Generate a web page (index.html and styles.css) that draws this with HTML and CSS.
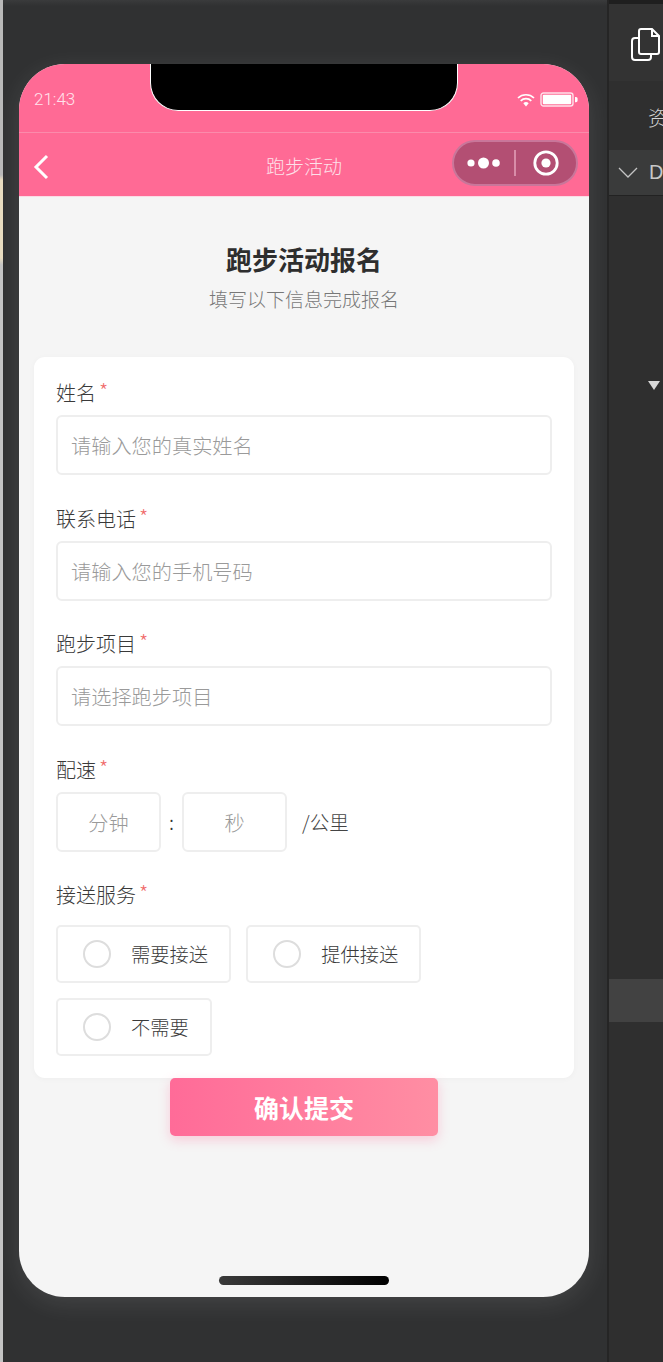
FILE: index.html
```html
<!DOCTYPE html>
<html lang="zh-CN">
<head>
<meta charset="utf-8">
<title>跑步活动</title>
<link rel="stylesheet" href="styles.css">
</head>
<body>
<div class="edge"></div>
<main class="stage">
  <div class="phone">
    <div class="notch"></div>
    <header class="head">
      <div class="status">
        <span class="time">21:43</span>
        <div class="status-icons">
          <svg class="wifi" width="18" height="14" viewBox="0 0 18 14"><path d="M1 5a11.5 11.5 0 0 1 16 0M3.7 7.8a7.6 7.6 0 0 1 10.6 0" fill="none" stroke="#fff" stroke-width="1.7"/><path d="M6.3 10.3a3.8 3.8 0 0 1 5.4 0L9 13.4z" fill="#fff"/></svg>
          <svg class="battery" width="38" height="15" viewBox="0 0 38 15"><rect x="1" y="1" width="32" height="13" rx="2.5" fill="none" stroke="#fff" stroke-opacity=".8" stroke-width="1.4"/><rect x="2.8" y="2.8" width="28.4" height="9.4" rx="1" fill="#fff"/><path d="M35 5h1a1.6 1.6 0 0 1 1.6 1.6v2a1.6 1.6 0 0 1-1.6 1.6h-1z" fill="#fff"/></svg>
        </div>
      </div>
      <nav class="navbar">
        <svg class="back" width="16" height="26" viewBox="0 0 16 26"><path d="M14 2 3 13l11 11" fill="none" stroke="#fff" stroke-width="3"/></svg>
        <span class="nav-title">跑步活动</span>
        <div class="capsule">
          <svg class="dots" width="34" height="14" viewBox="0 0 34 14"><circle cx="4" cy="7" r="3.6" fill="#fff"/><circle cx="16.5" cy="7" r="5.5" fill="#fff"/><circle cx="29" cy="7" r="3.8" fill="#fff"/></svg>
          <span class="cap-line"></span>
          <svg class="target" width="28" height="28" viewBox="0 0 28 28"><circle cx="14" cy="14" r="11.2" fill="none" stroke="#fff" stroke-width="2.8"/><circle cx="14" cy="14" r="4.6" fill="#fff"/></svg>
        </div>
      </nav>
    </header>
    <section class="content">
      <h1 class="title">跑步活动报名</h1>
      <p class="subtitle">填写以下信息完成报名</p>
      <form class="card">
        <div class="group">
          <div class="label">姓名<span class="req">*</span></div>
          <div class="input">请输入您的真实姓名</div>
        </div>
        <div class="group">
          <div class="label">联系电话<span class="req">*</span></div>
          <div class="input">请输入您的手机号码</div>
        </div>
        <div class="group">
          <div class="label">跑步项目<span class="req">*</span></div>
          <div class="input">请选择跑步项目</div>
        </div>
        <div class="group">
          <div class="label">配速<span class="req">*</span></div>
          <div class="pace">
            <div class="input small">分钟</div>
            <span class="colon">:</span>
            <div class="input small">秒</div>
            <span class="unit">/公里</span>
          </div>
        </div>
        <div class="group last">
          <div class="label">接送服务<span class="req">*</span></div>
          <div class="radios">
            <div class="radio"><span class="circle"></span>需要接送</div>
            <div class="radio"><span class="circle"></span>提供接送</div>
            <div class="radio"><span class="circle"></span>不需要</div>
          </div>
        </div>
      </form>
      <div class="submit">确认提交</div>
      <div class="home"></div>
    </section>
  </div>
</main>
<aside class="side">
  <div class="side-cap"></div>
  <div class="side-icon">
    <svg width="30" height="34" viewBox="0 0 30 34"><path d="M7 10H4a3 3 0 0 0-3 3v16a3 3 0 0 0 3 3h13a3 3 0 0 0 3-3v-2" fill="none" stroke="#fff" stroke-width="2"/><path d="M10 1h11l7 7v16a2 2 0 0 1-2 2H10a2 2 0 0 1-2-2V3a2 2 0 0 1 2-2zM21 1v7h7" fill="none" stroke="#fff" stroke-width="2"/></svg>
  </div>
  <div class="side-res">资</div>
  <div class="side-sec">
    <svg class="side-chev" width="20" height="12" viewBox="0 0 20 12"><path d="m1 1 9 9 9-9" fill="none" stroke="#c4c4c4" stroke-width="1.3"/></svg>
    <b>D</b>
  </div>
  <div class="side-tri"></div>
  <div class="side-row"></div>
</aside>
</body>
</html>
```
FILE: styles.css
```css
* { box-sizing: border-box; }
html, body { margin: 0; height: 100%; }
body {
  width: 663px;
  height: 1362px;
  display: flex;
  overflow: hidden;
  background: #303132;
  font-family: "Noto Sans CJK SC", "Noto Sans", sans-serif;
  font-weight: 300;
}
.edge {
  width: 3px;
  flex: none;
  background: linear-gradient(#b9b9b9 0 175px, #e8dcc0 180px 258px, #c4c4c4 265px);
}
.stage {
  width: 604px;
  flex: none;
  padding: 64px 0 0 16px;
  background: linear-gradient(#3a3b3c 0, #303132 6px);
}
.phone {
  position: relative;
  width: 570px;
  height: 1233px;
  border-radius: 46px;
  background: #f5f5f5;
  display: flex;
  flex-direction: column;
  box-shadow: 0 6px 26px rgba(255,255,255,.1);
}
.head { background: #ff6a95; border-radius: 46px 46px 0 0; flex: none; }
.notch {
  position: absolute;
  left: 131px;
  top: 0;
  width: 308px;
  height: 47px;
  background: #000;
  border: 1px solid #fff;
  border-top: 0;
  border-radius: 0 0 28px 28px;
}
.status {
  height: 69px;
  padding: 0 11px 0 15px;
  display: flex;
  align-items: center;
  justify-content: space-between;
  border-bottom: 1px solid #fb8bab;
  color: #ffe3ec;
}
.time { font: 300 17px/20px Roboto, sans-serif; margin-top: 2px; }
.status-icons { display: flex; align-items: center; gap: 5px; margin-top: 3px; }
.navbar {
  position: relative;
  height: 64px;
  padding: 0 11px 0 14px;
  display: flex;
  align-items: center;
  justify-content: space-between;
  border-bottom: 1px solid #fbdbe5;
}
.back { margin-top: 4px; }
.nav-title {
  position: absolute;
  left: 0;
  right: 0;
  top: 20px;
  text-align: center;
  font-size: 19px;
  line-height: 26px;
  color: #fde1ea;
}
.capsule {
  width: 126px;
  height: 46px;
  margin-top: -3px;
  border-radius: 23px;
  background: #b34f73;
  border: 2px solid #c9769a;
  display: flex;
  align-items: center;
  padding-left: 13px;
}
.cap-line { width: 1.5px; height: 26px; margin: 0 16px 0 13px; background: #d88da8; }
.content { flex: 1; display: flex; flex-direction: column; align-items: stretch; padding: 0 15px; }
.title {
  margin: 44px 0 0;
  font-size: 26px;
  line-height: 36px;
  font-weight: 700;
  text-align: center;
  color: #2e2e2e;
}
.subtitle {
  margin: 9px 0 0;
  font-size: 19px;
  line-height: 26px;
  text-align: center;
  color: #787878;
}
.card {
  margin-top: 45px;
  padding: 22px;
  background: #fff;
  border-radius: 11px;
  box-shadow: 0 1px 6px rgba(0,0,0,.03);
}
.group { margin-bottom: 29.5px; }
.group.last { margin-bottom: 0; }
.label {
  font-size: 20px;
  line-height: 26px;
  color: #3a3a3a;
  margin-bottom: 8px;
  height: 28px;
}
.req { color: #f06a6a; font-size: 21px; margin-left: 3px; position: relative; top: -1px; }
.input {
  height: 60px;
  padding: 0 13px;
  border: 2px solid #eeeeee;
  border-radius: 6px;
  font-size: 20.2px;
  line-height: 57px;
  color: #9a9a9a;
}
.pace { display: flex; align-items: center; }
.input.small { width: 105px; padding: 0; text-align: center; }
.colon { width: 21px; text-align: center; font-size: 20px; color: #333; }
.unit { margin-left: 15px; font-size: 19.5px; color: #444; }
.radios { display: flex; flex-wrap: wrap; gap: 15px; margin-top: 16px; }
.radio {
  height: 58px;
  padding: 0 21px 0 25px;
  border: 2px solid #eeeeee;
  border-radius: 5px;
  display: flex;
  align-items: center;
  font-size: 19.3px;
  color: #3a3a3a;
}
.circle {
  width: 28px;
  height: 28px;
  margin-right: 20px;
  border: 2px solid #dddddd;
  border-radius: 50%;
}
.submit {
  align-self: center;
  width: 268px;
  height: 58px;
  border-radius: 5px;
  background: linear-gradient(90deg, #ff6b98, #ff8ea3);
  box-shadow: 0 4px 12px rgba(255,107,152,.3);
  color: #fff;
  font-size: 25px;
  line-height: 58px;
  font-weight: 700;
  text-align: center;
}
.home {
  align-self: center;
  width: 170px;
  height: 9px;
  margin-top: 140px;
  border-radius: 5px;
  background: linear-gradient(90deg, #3a3a3a, #000);
}
.side {
  flex: 1;
  min-width: 0;
  overflow: hidden;
  display: flex;
  flex-direction: column;
  background: #2f2f2f;
  border-left: 2px solid #252525;
}
.side-cap { height: 4px; background: #1f1f1f; }
.side-icon { height: 77px; padding: 24px 0 0 22px; background: #333; }
.side-res {
  height: 69px;
  padding: 23px 0 0 39px;
  font-size: 20px;
  line-height: 28px;
  color: #d5d5d5;
  background: #2f2f2f;
}
.side-sec {
  height: 46px;
  padding-left: 9px;
  display: flex;
  align-items: center;
  gap: 11px;
  background: #3a3b3b;
  border-bottom: 1px solid #222;
  color: #c8c8c8;
  font-family: "Liberation Sans", sans-serif;
  font-size: 20px;
}
.side-chev { flex: none; }
.side-tri {
  width: 0;
  height: 0;
  margin: 185px 0 0 39px;
  border-left: 6px solid transparent;
  border-right: 6px solid transparent;
  border-top: 9px solid #d8d8d8;
}
.side-row { height: 43px; margin-top: 589px; background: #424242; }
```
